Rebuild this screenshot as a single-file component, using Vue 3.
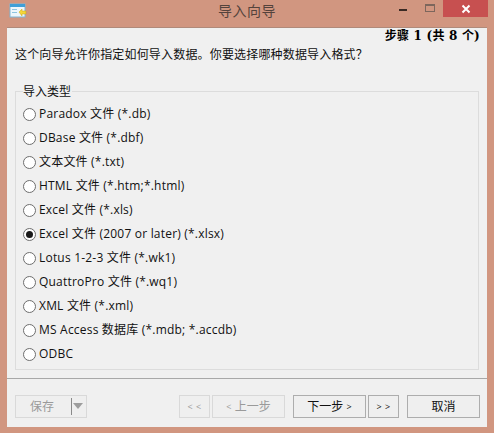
<script setup>
const options = [
  { label: 'Paradox 文件 (*.db)' },
  { label: 'DBase 文件 (*.dbf)' },
  { label: '文本文件 (*.txt)' },
  { label: 'HTML 文件 (*.htm;*.html)' },
  { label: 'Excel 文件 (*.xls)' },
  { label: 'Excel 文件 (2007 or later) (*.xlsx)', checked: true },
  { label: 'Lotus 1-2-3 文件 (*.wk1)' },
  { label: 'QuattroPro 文件 (*.wq1)' },
  { label: 'XML 文件 (*.xml)' },
  { label: 'MS Access 数据库 (*.mdb; *.accdb)' },
  { label: 'ODBC' },
]
</script>

<template>
  <div class="window">
    <header class="titlebar">
      <svg class="app-icon" width="18" height="18" viewBox="0 0 18 18">
        <rect x="1" y="3" width="15" height="13" fill="#eef6fb" stroke="#7fb6d6" />
        <rect x="1" y="3" width="15" height="3" fill="#3f9fd8" />
        <rect x="3" y="8" width="5" height="1" fill="#8fc4e0" />
        <rect x="3" y="11" width="5" height="1" fill="#8fc4e0" />
        <path d="M10 11 L13 8 V10 H17 V13 H13 V15 Z" fill="#f4d63a" stroke="#c9a514" stroke-width="0.5" />
      </svg>
      <div class="title">导入向导</div>
      <div class="controls">
        <div class="ctl min"><span></span></div>
        <div class="ctl max"><span></span></div>
        <div class="close">
          <svg width="10" height="10" viewBox="0 0 10 10">
            <path d="M1.5 1.5 L8.5 8.5 M8.5 1.5 L1.5 8.5" stroke="#fff" stroke-width="2" />
          </svg>
        </div>
      </div>
    </header>

    <main class="client">
      <div class="step">步骤 1 (共 8 个)</div>
      <p class="intro">这个向导允许你指定如何导入数据。你要选择哪种数据导入格式？</p>

      <section class="group">
        <div class="legend">导入类型</div>
        <div class="radio" v-for="o in options" :key="o.label">
          <span class="circle" :class="{ on: o.checked }"></span>
          <span class="label">{{ o.label }}</span>
        </div>
      </section>

      <div class="sep"></div>

      <footer class="buttons">
        <div class="btn disabled save">
          <span class="save-text">保存</span>
          <span class="save-div"></span>
          <span class="tri"></span>
        </div>
        <div class="spacer"></div>
        <div class="btn disabled small"><span class="arrow">&lt; &lt;</span></div>
        <div class="btn disabled wide"><span class="arrow">&lt;</span>&nbsp;上一步</div>
        <div class="btn wide next">下一步&nbsp;<span class="arrow">&gt;</span></div>
        <div class="btn small"><span class="arrow">&gt; &gt;</span></div>
        <div class="btn wide cancel">取消</div>
      </footer>
    </main>
  </div>
</template>

<style>
html, body { margin: 0; padding: 0; }
</style>

<style scoped>
.window {
  width: 494px;
  height: 433px;
  background: #d19680;
  box-sizing: border-box;
  padding: 0 7px 6px;
  display: flex;
  flex-direction: column;
  overflow: hidden;
  font-family: "Open Sans", "Noto Sans CJK SC", sans-serif;
  font-size: 12px;
  color: #111;
}
.titlebar {
  height: 27px;
  flex: none;
  display: flex;
  align-items: flex-start;
  position: relative;
}
.app-icon { margin: 1px 0 0 2px; }
.title {
  position: absolute;
  left: 0;
  right: 0;
  top: 1px;
  text-align: center;
  font-size: 14px;
  letter-spacing: 0.5px;
  line-height: 20px;
  color: #54433c;
}
.controls {
  position: absolute;
  right: -1px;
  top: 0;
  display: flex;
}
.ctl { width: 26px; height: 17px; position: relative; }
.min span {
  position: absolute; left: 8px; top: 9px;
  width: 8px; height: 2px; background: #3a2a24;
}
.max span {
  position: absolute; left: 8px; top: 4px;
  width: 8px; height: 5px;
  border: 1px solid #7d665c; border-top-width: 2px;
}
.close {
  width: 45px; height: 17px;
  background: #c75050;
  display: flex; align-items: center; justify-content: center;
}
.client {
  flex: 1;
  background: #f0f0f0;
  border-top: 1px solid #b08a7a;
  display: flex;
  flex-direction: column;
  padding: 0 8px;
  position: relative;
}
.step {
  font-family: "DejaVu Serif", "Noto Sans CJK SC", serif;
  font-weight: bold;
  font-size: 12px;
  letter-spacing: 0.2px;
  line-height: 14px;
  text-align: right;
  height: 14px;
  margin: 1px -1px 0 0;
  color: #000;
}
.intro {
  margin: 3px 0 0;
  line-height: 17px;
  height: 17px;
  letter-spacing: 0.17px;
}
.group {
  margin-top: 28px;
  height: 279px;
  box-sizing: border-box;
  border: 1px solid #dcdcdc;
  position: relative;
  padding-top: 10px;
  padding-left: 7px;
}
.legend {
  position: absolute;
  left: 7px;
  top: -8px;
  padding: 0 1px 0 0;
  background: #f0f0f0;
  line-height: 16px;
  height: 16px;
}
.radio {
  display: flex;
  align-items: center;
  height: 24px;
  gap: 3px;
}
.circle {
  width: 13px;
  height: 13px;
  box-sizing: border-box;
  border-radius: 50%;
  border: 1px solid #6e6e6e;
  background: #fff;
  flex: none;
  position: relative;
}
.circle.on::after {
  content: "";
  position: absolute;
  left: 2px;
  top: 2px;
  width: 7px;
  height: 7px;
  border-radius: 50%;
  background: #1a1a1a;
}
.label { line-height: 16px; white-space: nowrap; letter-spacing: 0.2px; }
.sep {
  height: 1px;
  background: #a8a8a8;
  margin: 8px -8px 0;
  flex: none;
}
.buttons {
  display: flex;
  margin: 16px -1px 0 0;
  height: 23px;
}
.spacer { flex: 1; }
.btn {
  box-sizing: border-box;
  height: 23px;
  border: 1px solid #adadad;
  background: #efefef;
  display: flex;
  align-items: center;
  justify-content: center;
  line-height: 16px;
  white-space: nowrap;
}
.btn.disabled { border-color: #d9d9d9; color: #9a9a9a; }
.arrow { font-size: 9px; }
.small { width: 31px; margin-left: 2px; }
.small .arrow { letter-spacing: 0.5px; }
.wide { width: 73px; margin-left: 2px; }
.next { margin-left: 8px; }
.cancel { margin-left: 8px; }
.save { width: 72px; justify-content: flex-start; position: relative; }
.save-text { margin-left: 14px; }
.save-div {
  position: absolute; left: 55px; top: 2px;
  width: 1px; height: 17px; background: #8a8a8a;
}
.tri {
  position: absolute; left: 57px; top: 7px;
  width: 0; height: 0;
  border-left: 5px solid transparent;
  border-right: 5px solid transparent;
  border-top: 6px solid #9d9d9d;
}
</style>
